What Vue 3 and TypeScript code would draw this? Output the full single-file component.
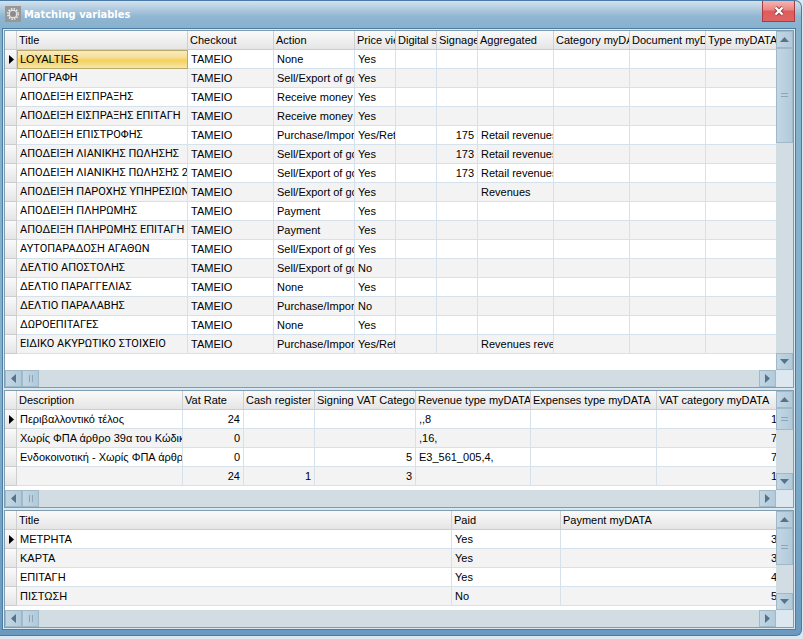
<script setup lang="ts">
import { ref } from 'vue'

interface Column {
  label: string
  width?: number
  numeric?: boolean
}

interface Grid {
  id: string
  name: string
  columns: Column[]
  rows: string[][]
  thumb: number
  main?: boolean
}

const grids: Grid[] = [
  {
    id: 'documents',
    name: 'Documents',
    main: true,
    thumb: 31,
    columns: [
      { label: 'Title', width: 171 },
      { label: 'Checkout', width: 86 },
      { label: 'Action', width: 81 },
      { label: 'Price view', width: 41 },
      { label: 'Digital signature', width: 41 },
      { label: 'Signage', width: 41, numeric: true },
      { label: 'Aggregated', width: 76 },
      { label: 'Category myDATA', width: 76 },
      { label: 'Document myDATA', width: 76 },
      { label: 'Type myDATA' },
    ],
    rows: [
      ['LOYALTIES', 'ΤΑΜΕΙΟ', 'None', 'Yes', '', '', '', '', '', ''],
      ['ΑΠΟΓΡΑΦΗ', 'ΤΑΜΕΙΟ', 'Sell/Export of goods', 'Yes', '', '', '', '', '', ''],
      ['ΑΠΟΔΕΙΞΗ ΕΙΣΠΡΑΞΗΣ', 'ΤΑΜΕΙΟ', 'Receive money', 'Yes', '', '', '', '', '', ''],
      ['ΑΠΟΔΕΙΞΗ ΕΙΣΠΡΑΞΗΣ ΕΠΙΤΑΓΗ', 'ΤΑΜΕΙΟ', 'Receive money', 'Yes', '', '', '', '', '', ''],
      ['ΑΠΟΔΕΙΞΗ ΕΠΙΣΤΡΟΦΗΣ', 'ΤΑΜΕΙΟ', 'Purchase/Import', 'Yes/Return', '', '175', 'Retail revenues', '', '', ''],
      ['ΑΠΟΔΕΙΞΗ ΛΙΑΝΙΚΗΣ ΠΩΛΗΣΗΣ', 'ΤΑΜΕΙΟ', 'Sell/Export of goods', 'Yes', '', '173', 'Retail revenues', '', '', ''],
      ['ΑΠΟΔΕΙΞΗ ΛΙΑΝΙΚΗΣ ΠΩΛΗΣΗΣ 2', 'ΤΑΜΕΙΟ', 'Sell/Export of goods', 'Yes', '', '173', 'Retail revenues', '', '', ''],
      ['ΑΠΟΔΕΙΞΗ ΠΑΡΟΧΗΣ ΥΠΗΡΕΣΙΩΝ', 'ΤΑΜΕΙΟ', 'Sell/Export of goods', 'Yes', '', '', 'Revenues', '', '', ''],
      ['ΑΠΟΔΕΙΞΗ ΠΛΗΡΩΜΗΣ', 'ΤΑΜΕΙΟ', 'Payment', 'Yes', '', '', '', '', '', ''],
      ['ΑΠΟΔΕΙΞΗ ΠΛΗΡΩΜΗΣ ΕΠΙΤΑΓΗ', 'ΤΑΜΕΙΟ', 'Payment', 'Yes', '', '', '', '', '', ''],
      ['ΑΥΤΟΠΑΡΑΔΟΣΗ ΑΓΑΘΩΝ', 'ΤΑΜΕΙΟ', 'Sell/Export of goods', 'Yes', '', '', '', '', '', ''],
      ['ΔΕΛΤΙΟ ΑΠΟΣΤΟΛΗΣ', 'ΤΑΜΕΙΟ', 'Sell/Export of goods', 'No', '', '', '', '', '', ''],
      ['ΔΕΛΤΙΟ ΠΑΡΑΓΓΕΛΙΑΣ', 'ΤΑΜΕΙΟ', 'None', 'Yes', '', '', '', '', '', ''],
      ['ΔΕΛΤΙΟ ΠΑΡΑΛΑΒΗΣ', 'ΤΑΜΕΙΟ', 'Purchase/Import', 'No', '', '', '', '', '', ''],
      ['ΔΩΡΟΕΠΙΤΑΓΕΣ', 'ΤΑΜΕΙΟ', 'None', 'Yes', '', '', '', '', '', ''],
      ['ΕΙΔΙΚΟ ΑΚΥΡΩΤΙΚΟ ΣΤΟΙΧΕΙΟ', 'ΤΑΜΕΙΟ', 'Purchase/Import', 'Yes/Return', '', '', 'Revenues revenues', '', '', ''],
    ],
  },
  {
    id: 'vat',
    name: 'VAT rates',
    thumb: 34,
    columns: [
      { label: 'Description', width: 166 },
      { label: 'Vat Rate', width: 61, numeric: true },
      { label: 'Cash register', width: 71, numeric: true },
      { label: 'Signing VAT Category', width: 101, numeric: true },
      { label: 'Revenue type myDATA', width: 115 },
      { label: 'Expenses type myDATA', width: 126 },
      { label: 'VAT category myDATA', numeric: true },
    ],
    rows: [
      ['Περιβαλλοντικό τέλος', '24', '', '', ',,8', '', '1'],
      ['Χωρίς ΦΠΑ άρθρο 39α του Κώδικα', '0', '', '', ',16,', '', '7'],
      ['Ενδοκοινοτική - Χωρίς ΦΠΑ άρθρο', '0', '', '5', 'E3_561_005,4,', '', '7'],
      ['', '24', '1', '3', '', '', '1'],
    ],
  },
  {
    id: 'payments',
    name: 'Payments',
    thumb: 57,
    columns: [
      { label: 'Title', width: 435 },
      { label: 'Paid', width: 109 },
      { label: 'Payment myDATA', numeric: true },
    ],
    rows: [
      ['ΜΕΤΡΗΤΑ', 'Yes', '3'],
      ['ΚΑΡΤΑ', 'Yes', '3'],
      ['ΕΠΙΤΑΓΗ', 'Yes', '4'],
      ['ΠΙΣΤΩΣΗ', 'No', '5'],
    ],
  },
]

const current = ref<Record<string, number>>({ documents: 0, vat: 0, payments: 0 })

const isGreek = (text: string): boolean => /[\u0370-\u03ff]/.test(text)
</script>

<template>
  <main class="window">
    <header class="titlebar">
      <svg class="app-icon" viewBox="0 0 16 16" aria-hidden="true">
        <rect width="16" height="16" fill="#979797" />
        <circle cx="8" cy="8" r="5.2" fill="none" stroke="#f4f4f4" stroke-width="1.5" stroke-dasharray="1.4 1.32" />
        <circle cx="8" cy="8" r="3.9" fill="none" stroke="#f2f2f2" stroke-width="1" />
        <rect x="6" y="6" width="4" height="4" fill="#8b8b8b" />
      </svg>
      <h1>Matching variables</h1>
      <button class="close" type="button" aria-label="Close">
        <svg viewBox="0 0 12 10" aria-hidden="true">
          <path d="M2.5 1.5 9.5 8.5M9.5 1.5 2.5 8.5" stroke="#8e3b40" stroke-width="4" />
          <path d="M2.5 1.5 9.5 8.5M9.5 1.5 2.5 8.5" stroke="#fff" stroke-width="2.4" />
        </svg>
      </button>
    </header>

    <div class="client">
      <section v-for="grid in grids" :key="grid.id" class="panel" :class="{ grow: grid.main }" :aria-label="grid.name">
        <div class="viewport">
          <table>
            <colgroup>
              <col class="marker-col" />
              <col v-for="column in grid.columns" :key="column.label" :style="column.width ? { width: column.width + 'px' } : undefined" />
            </colgroup>
            <thead>
              <tr>
                <td class="marker"></td>
                <th v-for="column in grid.columns" :key="column.label" scope="col">{{ column.label }}</th>
              </tr>
            </thead>
            <tbody>
              <tr v-for="(row, r) in grid.rows" :key="r" @click="current[grid.id] = r">
                <td class="marker">
                  <svg v-if="current[grid.id] === r" viewBox="0 0 5 9" aria-hidden="true"><path d="M0 0 5 4.5 0 9z" fill="#000" /></svg>
                </td>
                <td
                  v-for="(value, c) in row"
                  :key="c"
                  :class="{
                    numeric: grid.columns[c].numeric,
                    greek: grid.main && c === 0 && isGreek(value),
                    selected: grid.main && c === 0 && current[grid.id] === r,
                  }"
                >{{ value }}</td>
              </tr>
            </tbody>
          </table>
        </div>
        <div class="scroll vertical">
          <button type="button" aria-label="Scroll up">
            <svg viewBox="0 0 9 5" width="9" height="5"><path d="M0 5 4.5 0 9 5z" /></svg>
          </button>
          <div class="track">
            <div class="thumb" :style="{ height: grid.thumb + '%' }"><i></i></div>
          </div>
          <button type="button" aria-label="Scroll down">
            <svg viewBox="0 0 9 5" width="9" height="5"><path d="M0 0 4.5 5 9 0z" /></svg>
          </button>
        </div>
        <div class="scroll horizontal">
          <button type="button" aria-label="Scroll left">
            <svg viewBox="0 0 5 9" width="5" height="9"><path d="M5 0 0 4.5 5 9z" /></svg>
          </button>
          <div class="track">
            <div class="thumb"><i></i></div>
          </div>
          <button type="button" aria-label="Scroll right">
            <svg viewBox="0 0 5 9" width="5" height="9"><path d="M0 0 5 4.5 0 9z" /></svg>
          </button>
        </div>
        <div class="corner"></div>
      </section>
    </div>
  </main>
</template>

<style>
body {
  background: #dce7ef;
}
</style>

<style scoped>
* {
  box-sizing: border-box;
}

.window {
  display: flex;
  flex-direction: column;
  min-height: calc(100vh - 3px);
  margin-right: 1px;
  padding: 0 5px 5px 2px;
  border: 1px solid #4a7ba6;
  border-left: 0;
  border-radius: 0 7px 6px 0;
  background: linear-gradient(#d3e1ed 0, #8fb5d1 16px, #86b1cd 28px, #86b1cd 60%, #6a9abf 100%);
  color: #000;
  font: 11px/18px "Liberation Sans", Arial, sans-serif;
}

.titlebar {
  display: flex;
  align-items: flex-start;
  height: 27px;
  padding-left: 3px;
}

.app-icon {
  width: 16px;
  height: 16px;
  margin-top: 5px;
}

h1 {
  flex: 1;
  margin: 5px 0 0 3px;
  color: #fff;
  font: bold 11px/18px "DejaVu Sans Condensed", Tahoma, sans-serif;
}

.close {
  display: flex;
  align-items: center;
  justify-content: center;
  width: 33px;
  height: 21px;
  margin-right: 1px;
  padding: 0;
  border: 1px solid #a63c40;
  border-top: 0;
  background: linear-gradient(#f4b4b2, #e98583 45%, #dd5c5c 50%, #e06464);
}

.close svg {
  width: 12px;
  height: 10px;
}

.client {
  display: flex;
  flex: 1;
  flex-direction: column;
  gap: 2px;
  padding: 1px;
  border: 1px solid #4d7da5;
  background: #dce7ef;
}

.panel {
  display: grid;
  grid-template-columns: minmax(0, 1fr) 17px;
  grid-template-rows: 1fr 17px;
  border: 1px solid #7f9db0;
  background: #fff;
}

.grow {
  flex: 1;
}

.viewport {
  overflow: hidden;
  padding-bottom: 4px;
}

table {
  width: calc(100% + 5px);
  border-collapse: separate;
  border-spacing: 0;
  table-layout: fixed;
}

.marker-col {
  width: 12px;
}

th,
td {
  height: 19px;
  padding: 0 0 0 3px;
  overflow: hidden;
  border-right: 1px solid #d5e1eb;
  border-bottom: 1px solid #d5e1eb;
  font-weight: normal;
  line-height: 18px;
  text-align: left;
  text-overflow: clip;
  white-space: nowrap;
}

th {
  padding: 0 1px 0 2px;
  border-right: 1px solid #cfcfcf;
  border-bottom: 1px solid #cdcdcd;
  background: linear-gradient(#fafafa, #e5e5e5);
}

tbody tr:nth-child(even) td {
  background: #f3f3f3;
}

.numeric {
  padding: 0 3px 0 0;
  text-align: right;
}

.greek {
  font-family: Roboto, "Liberation Sans", sans-serif;
}

td.marker,
tbody tr:nth-child(even) td.marker {
  padding: 0 0 0 4px;
  border-right-color: #cfcfcf;
  border-bottom-color: #cdcdcd;
  background: linear-gradient(#fafafa, #e5e5e5);
}

.marker svg {
  display: block;
  width: 5px;
  height: 9px;
}

td.selected {
  padding-left: 2px;
  border: 1px solid #b9ab6c;
  background: linear-gradient(#f9ebbe, #f7e09a 35%, #f3d25e 55%, #f8e6a9);
  line-height: 17px;
}

.scroll {
  display: flex;
  background: #d2dde3;
}

.vertical {
  flex-direction: column;
}

.scroll button,
.thumb {
  display: flex;
  flex: none;
  align-items: center;
  justify-content: center;
  width: 17px;
  height: 17px;
  padding: 0;
  border: 1px solid #9fb9c9;
  background: linear-gradient(90deg, #c3d6e3, #b1cadb);
}

.scroll svg {
  fill: #587387;
}

.track {
  flex: 1;
}

.thumb i {
  width: 7px;
  height: 4px;
  border: solid #8ca6b7;
  border-width: 1px 0;
}

.horizontal .thumb i {
  width: 4px;
  height: 7px;
  border-width: 0 1px;
}

.corner {
  background: #dce7ef;
}
</style>
